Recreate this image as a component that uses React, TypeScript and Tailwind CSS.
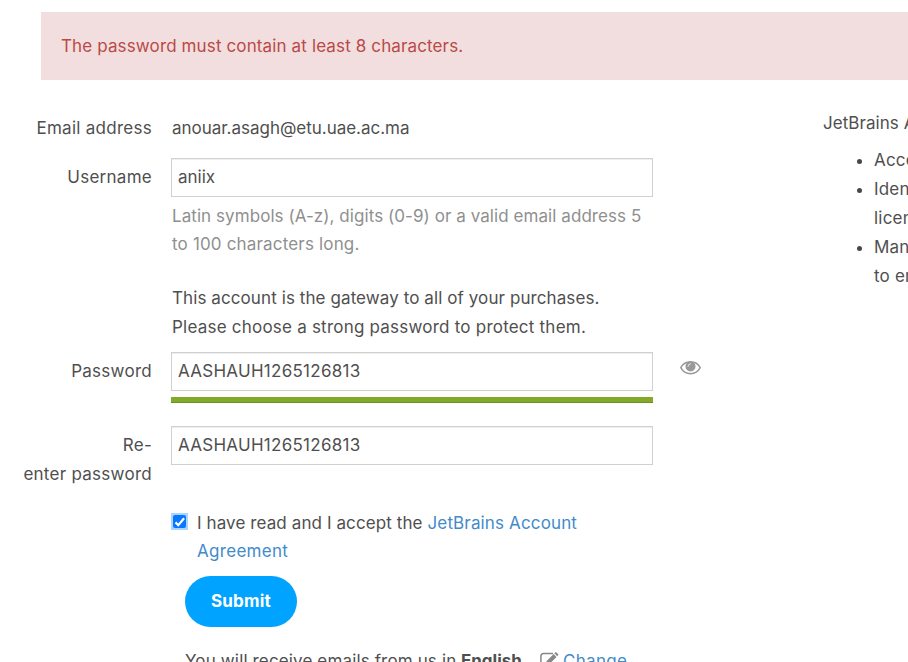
import React from "react";

const inputClass =
  "h-[39px] w-full border border-[#d1d1d1] bg-white px-[6px] pb-px text-[17px] text-[#4f4f4f] shadow-[inset_0_1px_1px_rgba(0,0,0,0.075)] outline-none";

function Label({ children }: { children: React.ReactNode }) {
  return <div className="w-[152px] shrink-0 text-right tracking-[0.27px]">{children}</div>;
}

function EyeIcon() {
  return (
    <svg width="21" height="14" viewBox="0 0 21 14" className="block">
      <path d="M.8 6.7C5 -1.2 16 -1.2 20.2 6.7C16 14.6 5 14.6 .8 6.7Z" fill="none" stroke="#999" strokeWidth="1.5" />
      <circle cx="10.5" cy="5.4" r="5" fill="#999" />
      <path d="M8 5.3a2.6 2.6 0 0 1 2.4-2.5" fill="none" stroke="#eee" strokeWidth="1" strokeLinecap="round" />
    </svg>
  );
}

function EditIcon() {
  return (
    <svg width="19" height="17" viewBox="0 0 19 17" className="block">
      <path d="M13 1.6H3.5A2.6 2.6 0 0 0 .9 4.2v8.6a2.6 2.6 0 0 0 2.6 2.6h8.8a2.6 2.6 0 0 0 2.6-2.6V10" fill="none" stroke="#888" strokeWidth="1.5" />
      <path d="M6.5 9.2 13.6 2l2.9 2.9-7.1 7.2H6.5ZM14.3 1.3l.7-.7a1.1 1.1 0 0 1 1.5 0l1.4 1.4a1.1 1.1 0 0 1 0 1.5l-.7.7Z" fill="#888" />
    </svg>
  );
}

export default function App() {
  return (
    <div className="flex h-[662px] w-[908px] flex-col overflow-hidden bg-white pt-3 font-['Inter','Liberation_Sans',sans-serif] text-[17px] font-normal leading-[28.8px] text-[#4f4f4f]">
      <div className="ml-[41px] flex h-[68px] shrink-0 items-center bg-[#f2dede] pl-5 text-[#b94a48]">
        <span className="tracking-[0.13px]">The password must contain at least 8 characters.</span>
      </div>

      <div className="flex">
        <main className="flex w-[823px] shrink-0 flex-col pt-[34px]">
          <div className="flex h-11 gap-[19px]">
            <Label>Email address</Label>
            <span className="pl-px tracking-[-0.02px]">anouar.asagh@etu.uae.ac.ma</span>
          </div>

          <div className="flex h-[126px] gap-[19px]">
            <Label><div className="pt-[5px]">Username</div></Label>
            <div className="w-[482px]">
              <input className={inputClass} defaultValue="aniix" />
              <div className="whitespace-nowrap pl-px pt-[5px] leading-[28px] text-[#8f8f8f]">
                <div><span className="tracking-[0.065px]">Latin symbols (A-z), digits (0-9) or a valid email address 5</span></div>
                <div><span className="tracking-[0.17px]">to 100 characters long.</span></div>
              </div>
            </div>
          </div>

          <div className="ml-[172px] h-[68px] whitespace-nowrap">
            <div><span className="tracking-[0.09px]">This account is the gateway to all of your purchases.</span></div>
            <div><span className="tracking-[0.22px]">Please choose a strong password to protect them.</span></div>
          </div>

          <div className="flex h-[74px] gap-[19px]">
            <Label><div className="pt-[5px]">Password</div></Label>
            <div className="w-[482px]">
              <input className={inputClass + " tracking-[0.27px]"} defaultValue="AASHAUH1265126813" />
              <div className="mt-[6px] h-[6px] bg-[#82aa28] shadow-[inset_0_-1px_0_#6d9020]" />
            </div>
            <div className="ml-2 pt-[9px]"><EyeIcon /></div>
          </div>

          <div className="flex h-[83px] gap-[19px]">
            <Label>
              <div className="pt-[5px]">Re-</div>
              <div className="whitespace-nowrap">enter password</div>
            </Label>
            <div className="w-[482px]">
              <input className={inputClass + " tracking-[0.27px]"} defaultValue="AASHAUH1265126813" />
            </div>
          </div>

          <div className="ml-[171px] flex h-[67px] gap-[9px] whitespace-nowrap leading-[28px]">
            <div className="mt-1 flex h-[17px] w-[17px] items-center justify-center bg-[#a9d5ff]">
              <div className="flex h-[13px] w-[13px] items-center justify-center rounded-[2px] bg-[#0878ff]">
                <svg width="12" height="12" viewBox="0 0 12 12">
                  <path d="m1.5 6.4 2.8 2.8 5.8-7" fill="none" stroke="#fff" strokeWidth="2.2" />
                </svg>
              </div>
            </div>
            <div>
              <div>
                <span className="tracking-[0.1px]">I have read and I accept the </span>
                <span className="tracking-[0.14px] text-[#428bca]">JetBrains Account</span>
              </div>
              <div><span className="tracking-[0.3px] text-[#428bca]">Agreement</span></div>
            </div>
          </div>

          <div className="ml-[185px]">
            <button className="flex h-[51px] w-[112px] items-center justify-center rounded-full bg-[#00a3ff] font-bold text-white">
              <span className="tracking-[0.2px]">Submit</span>
            </button>
            <div className="mt-5 flex h-7 whitespace-nowrap leading-[28px]">
              <span className="w-[276px] tracking-[0.14px]">You will receive emails from us in</span>
              <span className="w-[79px] font-bold tracking-[-0.02px]">English</span>
              <span className="w-[23px] pt-[5px]"><EditIcon /></span>
              <span className="tracking-[0.3px] text-[#428bca]">Change</span>
            </div>
          </div>
        </main>

        <aside className="w-[300px] shrink-0 pt-[29px]">
          <div><span className="tracking-[0.05px]">JetBrains Account</span></div>
          <ul className="flex list-none flex-col pt-[8.6px]">
            {["Access", "Identify", "licenses", "Manage", "to enter"].map((t, i) => (
              <li key={t} className="flex items-center">
                <span className="flex w-[51px] items-center pl-[34px]">
                  {i !== 2 && i !== 4 && <span className="mt-0.5 h-[5px] w-[5px] rounded-full bg-[#474747]" />}
                </span>
                <span className="tracking-[0.2px]">{t}</span>
              </li>
            ))}
          </ul>
        </aside>
      </div>
    </div>
  );
}
